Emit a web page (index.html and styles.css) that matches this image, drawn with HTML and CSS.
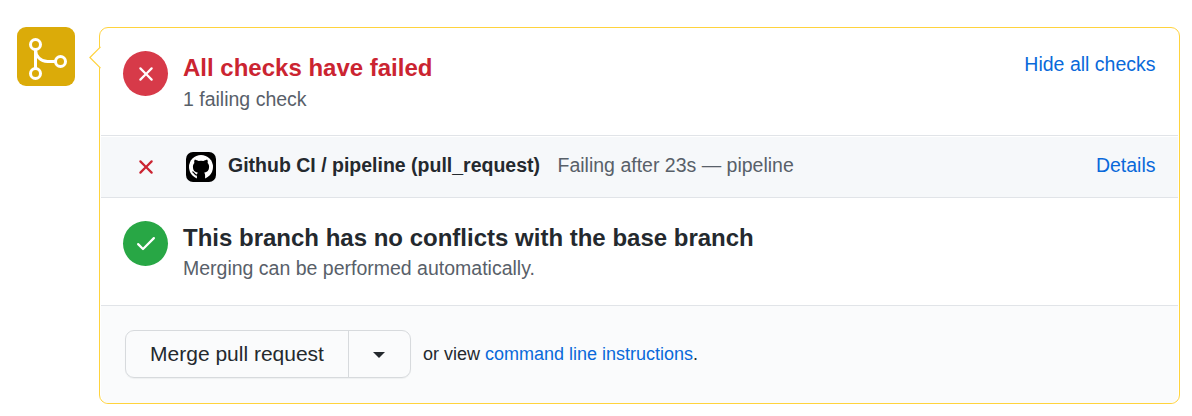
FILE: index.html
```html
<!DOCTYPE html>
<html lang="en">
<head>
<meta charset="utf-8">
<title>Merge status</title>
<link rel="stylesheet" href="styles.css">
</head>
<body>
<main class="merge">
  <div class="avatar">
    <svg class="avatar-icon" viewBox="0 0 24 24" width="48" height="48" fill="none" stroke="#fff" stroke-width="1.5">
      <circle cx="5.75" cy="4.75" r="2.5"/>
      <circle cx="5.75" cy="19.25" r="2.5"/>
      <circle cx="18.25" cy="13.25" r="2.5"/>
      <path d="M5.75 7.25v9.5M5.75 7.25c0 3.4 2.6 6 6 6h4"/>
    </svg>
  </div>
  <section class="panel">
    <svg class="pointer" viewBox="0 0 12 24" width="12" height="24"><path d="M12 0L1 11.5L12 23z" fill="#fff"/><path d="M11.5 .8L.9 11.5L11.5 22.2" fill="none" stroke="#ffd33d" stroke-width="1.2"/></svg>
    <div class="section status">
      <span class="badge badge-fail">
        <svg viewBox="0 0 16 16" width="24" height="24" fill="#fff"><path d="M3.72 3.72a.75.75 0 011.06 0L8 6.94l3.22-3.22a.75.75 0 111.06 1.06L9.06 8l3.22 3.22a.75.75 0 11-1.06 1.06L8 9.06l-3.22 3.22a.75.75 0 01-1.06-1.06L6.94 8 3.72 4.78a.75.75 0 010-1.06z"/></svg>
      </span>
      <div class="copy">
        <h3 class="title title-fail">All checks have failed</h3>
        <p class="note">1 failing check</p>
      </div>
      <a class="link toggle">Hide all checks</a>
    </div>
    <div class="check">
      <svg class="check-x" viewBox="0 0 16 16" width="24" height="24" fill="#cb2431"><path d="M3.72 3.72a.75.75 0 011.06 0L8 6.94l3.22-3.22a.75.75 0 111.06 1.06L9.06 8l3.22 3.22a.75.75 0 11-1.06 1.06L8 9.06l-3.22 3.22a.75.75 0 01-1.06-1.06L6.94 8 3.72 4.78a.75.75 0 010-1.06z"/></svg>
      <span class="app">
        <svg viewBox="0 0 30 30" width="30" height="30">
          <circle cx="15" cy="15" r="12" fill="#fff"/>
          <path d="M8.6 7.7c1.5 0 2.8.6 4 1.4a12 12 0 014.8 0c1.2-.8 2.5-1.4 4-1.4.5 1.2.5 2.4.2 3.4 1 1.1 1.5 2.4 1.5 4 0 3.5-1.8 5.1-5 5.7.8.7 1 1.6 1 2.8v4.2h-8.2v-4.2c0-1.200.2-2.100 1-2.800-3.200-.6-5-2.200-5-5.700 0-1.600.5-2.900 1.500-4-.3-1-.3-2.200.2-3.400z" fill="#000"/>
          <path d="M6.300 19.800c2.400.3 1.800 3.600 5 3.300" fill="none" stroke="#000" stroke-width="1.100"/>
        </svg>
      </span>
      <strong class="check-name">Github CI / pipeline (pull_request)</strong>
      <span class="check-note">Failing after 23s — pipeline</span>
      <a class="link details">Details</a>
    </div>
    <div class="section conflicts">
      <span class="badge badge-ok">
        <svg class="ok-icon" viewBox="0 0 16 16" width="24" height="24" fill="#fff"><path d="M13.78 4.22a.75.75 0 010 1.06l-7.25 7.25a.75.75 0 01-1.06 0L2.22 9.28a.75.75 0 011.06-1.06L6 10.94l6.72-6.72a.75.75 0 011.06 0z"/></svg>
      </span>
      <div class="copy">
        <h3 class="title">This branch has no conflicts with the base branch</h3>
        <p class="note note-tight">Merging can be performed automatically.</p>
      </div>
    </div>
    <div class="actions">
      <div class="button-group">
        <button class="button button-merge" type="button">Merge pull request</button>
        <button class="button button-menu" type="button" aria-label="Select merge method"><span class="caret"></span></button>
      </div>
      <p class="hint">or view <a class="link">command line instructions</a>.</p>
    </div>
  </section>
</main>
</body>
</html>
```
FILE: styles.css
```css
* { box-sizing: border-box; }
body {
  margin: 0;
  background: #fff;
  color: #24292e;
  font-family: "Liberation Sans", Arial, sans-serif;
}
h3, p { margin: 0; }
svg { display: block; flex: none; }
.merge {
  display: flex;
  align-items: flex-start;
  gap: 24px;
  padding: 27px 12px 0 17px;
}
.avatar {
  flex: none;
  width: 58px;
  height: 59px;
  padding: 8px 0 0 7px;
  border-radius: 9px;
  background: #dbab09;
}
.panel {
  position: relative;
  flex: 1;
  height: 377px;
  padding: 0 1px;
  border: 1px solid #ffd33d;
  border-radius: 9px;
}
.pointer {
  position: absolute;
  left: -11px;
  top: 18px;
}
.section {
  display: flex;
  align-items: flex-start;
  gap: 15px;
  padding: 23px 22.5px 0 22px;
}
.status { height: 107px; }
.conflicts { height: 107px; }
.badge {
  display: flex;
  flex: none;
  align-items: center;
  justify-content: center;
  width: 45px;
  height: 45px;
  border-radius: 50%;
}
.badge-fail { background: #d73a49; }
.badge-ok { background: #28a745; }
.ok-icon { margin-bottom: 1px; }
.copy { flex: 1; }
.title {
  font-size: 24px;
  line-height: 33px;
  font-weight: 700;
}
.title-fail { color: #cb2431; }
.note {
  color: #586069;
  font-size: 19.5px;
  line-height: 30px;
}
.note-tight { line-height: 28px; }
.link { color: #0969da; }
.toggle {
  font-size: 19.5px;
  line-height: 27px;
}
.check {
  display: flex;
  align-items: center;
  height: 63px;
  padding: 0 22.5px 0 33px;
  border-top: 1px solid #e1e4e8;
  border-bottom: 1px solid #e1e4e8;
  background: #f6f8fa;
  box-shadow: inset 0 1px #fff;
  font-size: 19.5px;
  line-height: 30px;
}
.app {
  display: flex;
  width: 30px;
  height: 30px;
  margin: 0 12px 0 28px;
  border-radius: 7px;
  background: #000;
  overflow: hidden;
}
.check-note {
  flex: 1;
  margin-left: 17.5px;
  color: #586069;
}
.check-name, .check-note, .details { padding-bottom: 3px; }
.actions {
  display: flex;
  align-items: center;
  gap: 12px;
  height: 98px;
  padding: 0 24px;
  border-top: 1px solid #e1e4e8;
  border-radius: 0 0 8px 8px;
  background: #fafbfc;
}
.button-group {
  display: flex;
  height: 48px;
  margin-bottom: 2px;
  border: 1px solid #d7dadd;
  border-radius: 9px;
  box-shadow: 0 1px 1px rgba(27, 31, 35, .05);
}
.button {
  padding: 0;
  border: 0;
  background: transparent;
  color: #24292e;
  font: 21px/30px "Liberation Sans", Arial, sans-serif;
}
.button-merge { width: 222px; }
.button-menu {
  display: flex;
  align-items: center;
  justify-content: center;
  width: 62px;
  padding-right: 2px;
  border-left: 1px solid #d7dadd;
}
.caret {
  border: 6px solid transparent;
  border-top-color: #24292e;
  border-bottom: 0;
  margin-top: 2px;
}
.hint {
  font-size: 18px;
  line-height: 27px;
}
```
